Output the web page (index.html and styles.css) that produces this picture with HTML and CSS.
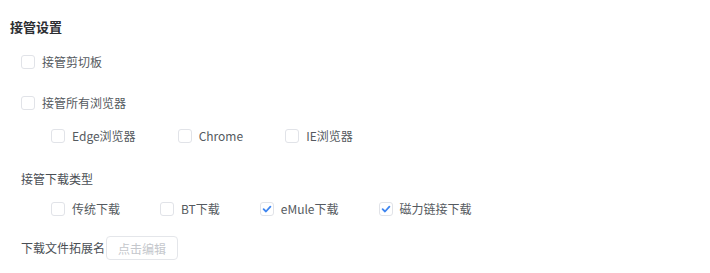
FILE: index.html
```html
<!DOCTYPE html>
<html>
<head>
<meta charset="utf-8">
<link rel="stylesheet" href="styles.css">
</head>
<body>
<div class="page">
  <div class="title">接管设置</div>

  <label class="cb row-clip"><span class="box"></span><span class="txt">接管剪切板</span></label>

  <label class="cb row-all"><span class="box"></span><span class="txt">接管所有浏览器</span></label>

  <div class="group row-browsers">
    <label class="cb"><span class="box"></span><span class="txt">Edge浏览器</span></label>
    <label class="cb"><span class="box"></span><span class="txt">Chrome</span></label>
    <label class="cb"><span class="box"></span><span class="txt">IE浏览器</span></label>
  </div>

  <div class="label row-type">接管下载类型</div>

  <div class="group row-types">
    <label class="cb"><span class="box"></span><span class="txt">传统下载</span></label>
    <label class="cb"><span class="box"></span><span class="txt">BT下载</span></label>
    <label class="cb"><span class="box checked"><svg viewBox="0 0 14 14" width="14" height="14"><path d="M3.6 7.2 L6 9.5 L10.4 4.6" fill="none" stroke="#3f86f0" stroke-width="1.8" stroke-linecap="round" stroke-linejoin="round"/></svg></span><span class="txt">eMule下载</span></label>
    <label class="cb"><span class="box checked"><svg viewBox="0 0 14 14" width="14" height="14"><path d="M3.6 7.2 L6 9.5 L10.4 4.6" fill="none" stroke="#3f86f0" stroke-width="1.8" stroke-linecap="round" stroke-linejoin="round"/></svg></span><span class="txt">磁力链接下载</span></label>
  </div>

  <div class="ext row-ext">
    <span class="label">下载文件拓展名</span>
    <span class="btn">点击编辑</span>
  </div>
</div>
</body>
</html>
```
FILE: styles.css
```css
html, body {
  margin: 0;
  padding: 0;
  background: #ffffff;
}
body {
  font-family: "Noto Sans CJK SC", "Open Sans", sans-serif;
  font-size: 12px;
  color: #555a60;
}
.page {
  padding: 17px 0 0 10px;
  display: flex;
  flex-direction: column;
  align-items: flex-start;
}
.title {
  font-size: 13px;
  font-weight: bold;
  color: #2c2e32;
  line-height: 20px;
  height: 20px;
}
.cb {
  display: flex;
  align-items: center;
  height: 20px;
  line-height: 20px;
}
.box {
  width: 12px;
  height: 12px;
  border: 1px solid #e1e3e8;
  border-radius: 3px;
  background: #fff;
  display: flex;
  align-items: center;
  justify-content: center;
  box-sizing: content-box;
}
.box svg {
  display: block;
  flex: none;
}
.txt {
  margin-left: 7px;
  white-space: nowrap;
}
.row-clip {
  margin: 15px 0 0 11px;
}
.row-all {
  margin: 21px 0 0 11px;
}
.group {
  display: flex;
  gap: 42px;
  height: 20px;
}
.row-browsers {
  margin: 13px 0 0 41px;
}
.label {
  line-height: 20px;
  height: 20px;
  color: #4a4e54;
  white-space: nowrap;
}
.row-type {
  margin: 23px 0 0 11px;
}
.row-types {
  margin: 10px 0 0 41px;
  gap: 40px;
}
.ext {
  display: flex;
  align-items: center;
  margin: 17px 0 0 11px;
  height: 24px;
}
.btn {
  display: flex;
  align-items: center;
  justify-content: center;
  width: 70px;
  height: 22px;
  border: 1px solid #e4e6ea;
  border-radius: 4px;
  color: #c4c7cc;
  margin-left: 1px;
}
```
